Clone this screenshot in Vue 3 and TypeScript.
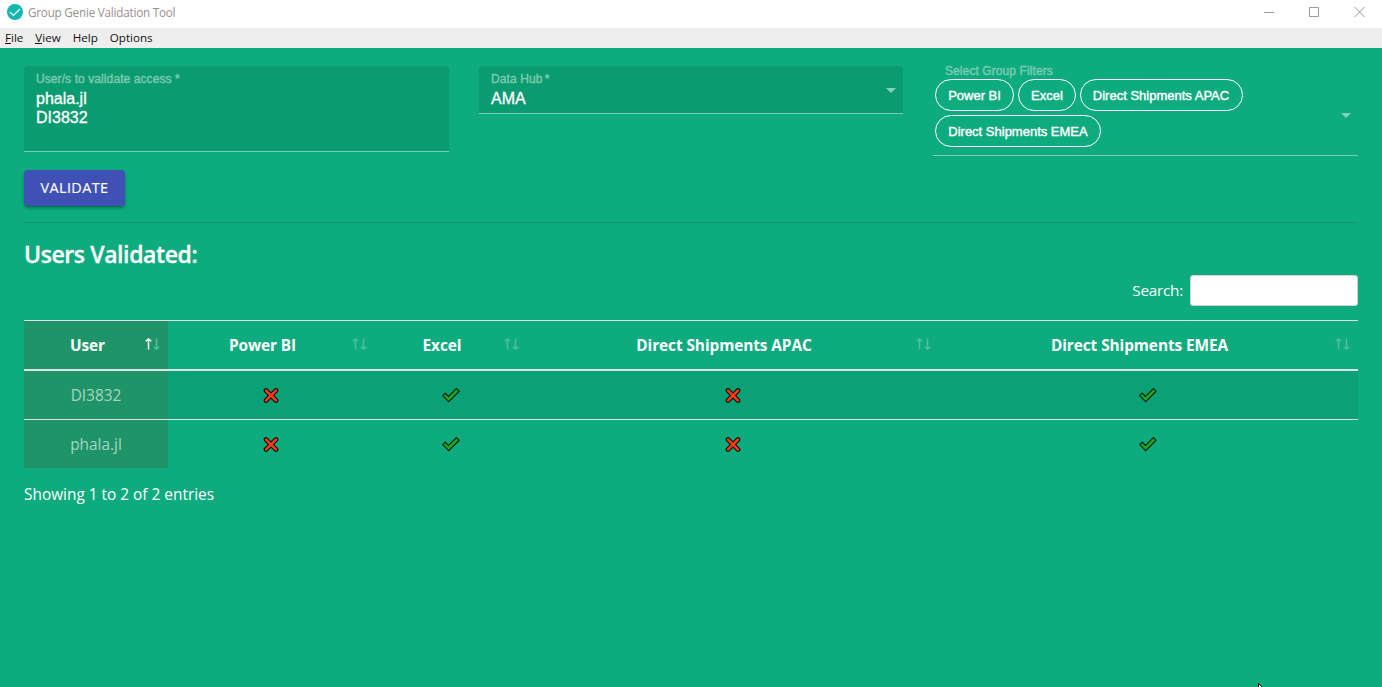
<script setup lang="ts">
interface Column {
  key: string
  label: string
}
interface Row {
  user: string
  access: boolean[]
}

const menus: string[] = ['File', 'View', 'Help', 'Options']
const filters: string[] = ['Power BI', 'Excel', 'Direct Shipments APAC', 'Direct Shipments EMEA']
const columns: Column[] = [
  { key: 'user', label: 'User' },
  { key: 'powerbi', label: 'Power BI' },
  { key: 'excel', label: 'Excel' },
  { key: 'apac', label: 'Direct Shipments APAC' },
  { key: 'emea', label: 'Direct Shipments EMEA' },
]
const rows: Row[] = [
  { user: 'DI3832', access: [false, true, false, true] },
  { user: 'phala.jl', access: [false, true, false, true] },
]
</script>

<template>
  <div class="window">
    <header class="titlebar">
      <svg class="logo" width="16" height="16" viewBox="0 0 16 16">
        <circle cx="8" cy="8" r="8" fill="#12b8b0" />
        <path d="M3 8.2l3.4 3.3L13 5" fill="none" stroke="#fff" stroke-width="1.2" />
      </svg>
      <span class="title">Group Genie Validation Tool</span>
      <div class="controls">
        <svg width="10" height="10" viewBox="0 0 10 10"><path d="M0 5.5h10" /></svg>
        <svg width="10" height="10" viewBox="0 0 10 10"><path d="M.5 .5h9v9h-9z" /></svg>
        <svg width="11" height="10" viewBox="0 0 11 10"><path d="M.5 0l10 10M10.5 0L.5 10" /></svg>
      </div>
    </header>
    <nav class="menubar">
      <span v-for="(m, i) in menus" :key="m" class="menu">
        <template v-if="i < 2"><span class="mnemonic">{{ m[0] }}</span>{{ m.slice(1) }}</template>
        <template v-else>{{ m }}</template>
      </span>
    </nav>
    <main class="content">
      <section class="form">
        <div class="field filled users">
          <label class="label">User/s to validate access *</label>
          <div class="value">phala.jl<br />DI3832</div>
        </div>
        <div class="field filled hub">
          <label class="label">Data Hub <span class="star">*</span></label>
          <div class="value">AMA</div>
          <i class="caret" />
        </div>
        <div class="field groups">
          <label class="label">Select Group Filters</label>
          <div class="chips">
            <span v-for="(f, i) in filters" :key="f" :class="['chip', 'chip-' + i]">{{ f }}</span>
          </div>
          <i class="caret" />
        </div>
      </section>
      <button class="validate">VALIDATE</button>
      <div class="divider" />
      <h2 class="heading">Users Validated:</h2>
      <div class="search">
        <label for="search">Search:</label>
        <input id="search" type="text" />
      </div>
      <div class="table">
        <div class="row head">
          <div v-for="(c, i) in columns" :key="c.key" :class="['cell', { sorted: i === 0 }]">
            <span>{{ c.label }}</span>
            <svg :class="['sort', 'sort-' + c.key]" width="15" height="12" viewBox="0 0 15 12">
              <path :class="{ on: i === 0 }" d="M3.5 11.5V1M.7 3.3L3.5.9l2.8 2.4" />
              <path d="M11.5 .5V11M8.7 8.7l2.8 2.4 2.8-2.4" />
            </svg>
          </div>
        </div>
        <div v-for="r in rows" :key="r.user" class="row body">
          <div class="cell sorted user">{{ r.user }}</div>
          <div v-for="(ok, i) in r.access" :key="i" class="cell">
            <svg v-if="ok" width="18" height="16" viewBox="0 0 18 16">
              <path d="M.7 8.7L3.2 6.2 6.5 9.4 14.4 1.5 17.2 4.2 6.7 14.6z" fill="#1fa824" stroke="#10210f" stroke-width="1.2" />
            </svg>
            <svg v-else width="16" height="16" viewBox="0 0 16 16">
              <path d="M3 3.5l10 10M13 3.5l-10 10" stroke="#170604" stroke-width="4.6" stroke-linecap="round" />
              <path d="M3 3.5l10 10M13 3.5l-10 10" stroke="#ef3b18" stroke-width="2.5" stroke-linecap="round" />
            </svg>
          </div>
        </div>
      </div>
      <div class="info">Showing 1 to 2 of 2 entries</div>
    </main>
    <svg class="pointer" width="12" height="19" viewBox="0 0 12 19">
      <path d="M.5 .5v15l3.5-3.4 2.3 5.4 2.2-1-2.3-5.2h5z" fill="#fff" stroke="#000" />
    </svg>
  </div>
</template>

<style>
body {
  overflow: hidden;
}
</style>

<style scoped>
* {
  box-sizing: border-box;
}
.window {
  position: relative;
  display: flex;
  flex-direction: column;
  height: 687px;
  overflow: hidden;
  background: #0dab7e;
  color: #fff;
  font-family: 'Open Sans', 'Noto Sans', sans-serif;
}
.titlebar {
  display: flex;
  align-items: center;
  height: 28px;
  flex: none;
  padding: 0 17px 4px 7px;
  background: #fff;
}
.title {
  margin-left: 5px;
  font-size: 11.7px;
  letter-spacing: -0.22px;
  color: #9a9090;
  white-space: nowrap;
}
.controls {
  display: flex;
  gap: 35px;
  margin-left: auto;
}
.controls svg {
  display: block;
  fill: none;
  stroke: #a49599;
  stroke-width: 1;
}
.menubar {
  display: flex;
  gap: 12px;
  flex: none;
  height: 20px;
  padding-left: 5px;
  background: #eee;
  color: #111;
  font-size: 11.6px;
  line-height: 20px;
}
.mnemonic {
  display: inline-block;
  height: 16px;
  border-bottom: 1px solid #111;
}
.content {
  padding: 18px 24px 0;
}
.form {
  display: grid;
  grid-template-columns: 425px 424px 425px;
  gap: 30px;
  height: 104px;
  align-items: start;
  font-family: 'Liberation Sans', Arial, sans-serif;
}
.field {
  position: relative;
  border-bottom: 1px solid #77cdb2;
}
.filled {
  padding: 6px 12px 0;
  border-radius: 4px 4px 0 0;
  background: #0b9b70;
}
.label {
  display: block;
  font-size: 12px;
  letter-spacing: 0.09px;
  line-height: 15px;
  color: #7ccbb0;
  -webkit-text-stroke: 0.4px #7ccbb0;
}
.star {
  margin-left: -1px;
}
.value {
  margin-top: 2px;
  font-size: 16px;
  line-height: 19px;
  -webkit-text-stroke: 0.3px #fff;
}
.users {
  height: 86px;
}
.hub {
  height: 48px;
}
.groups {
  height: 90px;
}
.groups .label {
  padding-left: 12px;
  height: 13px;
  line-height: 11px;
}
.caret {
  position: absolute;
  right: 7px;
  top: 22px;
  border: 5px solid transparent;
  border-top-color: #86d0b8;
  border-bottom: 0;
}
.groups .caret {
  top: 47px;
}
.chips {
  display: flex;
  flex-wrap: wrap;
  gap: 4px;
  width: 340px;
  padding-left: 2px;
}
.chip {
  height: 32px;
  border: 1px solid #fff;
  border-radius: 16px;
  font-size: 13px;
  line-height: 31px;
  text-align: center;
  white-space: nowrap;
  -webkit-text-stroke: 0.4px #fff;
}
.chip-0 {
  width: 79px;
}
.chip-1 {
  width: 58px;
}
.chip-2 {
  width: 163px;
  padding-right: 1px;
}
.chip-3 {
  width: 166px;
}
.validate {
  display: block;
  width: 101px;
  height: 36px;
  padding: 0;
  border: 0;
  border-radius: 4px;
  background: #3f51b5;
  box-shadow: 0 2px 3px rgba(0, 50, 30, 0.45);
  color: #fff;
  font: 14.4px/36px 'Open Sans', sans-serif;
  letter-spacing: 0.4px;
  -webkit-text-stroke: 0.15px #fff;
}
.divider {
  height: 1px;
  margin-top: 16px;
  background: #0b9970;
}
.heading {
  height: 34px;
  margin: 14px 0 0;
  font-size: 23px;
  font-weight: 600;
  letter-spacing: -0.4px;
  line-height: 34px;
  -webkit-text-stroke: 0.3px #fff;
}
.search {
  display: flex;
  justify-content: flex-end;
  align-items: center;
  gap: 7px;
  height: 31px;
  margin-top: 4px;
  font-size: 15.3px;
}
.search label {
  padding-bottom: 2px;
  letter-spacing: -0.25px;
}
.search input {
  width: 168px;
  height: 31px;
  border: 1px solid #ced4da;
  border-radius: 3px;
  background: #fff;
}
.table {
  margin-top: 14px;
  border-top: 1px solid #dee2e6;
}
.row {
  display: grid;
  grid-template-columns: 144px 206px 153px 411px 420px;
}
.cell {
  position: relative;
  display: flex;
  align-items: center;
  justify-content: center;
  height: 48px;
  font-size: 15.4px;
}
.head {
  border-bottom: 2px solid #dee2e6;
}
.head .cell {
  padding: 1px 17px 0 0;
  font-weight: 700;
  letter-spacing: -0.08px;
  white-space: nowrap;
}
.sorted {
  background: #1f9468;
}
.body:nth-child(2) {
  border-bottom: 1px solid #dee2e6;
}
.body:nth-child(2) .cell:not(.sorted) {
  background: #0ba177;
}
.user {
  padding-top: 1px;
  color: #a5d4c3;
}
.cell > svg {
  display: block;
  fill: none;
}
.cell > .sort {
  position: absolute;
  right: 8px;
  top: 17px;
  stroke: #4fbf9c;
  stroke-width: 1.5;
}
.cell > .sort-powerbi,
.cell > .sort-apac {
  right: 7px;
}
.sort .on {
  stroke: #fff;
}
.info {
  margin-top: 15px;
  font-size: 15.4px;
  line-height: 24px;
}
.pointer {
  position: absolute;
  left: 1258px;
  top: 683px;
}
</style>
